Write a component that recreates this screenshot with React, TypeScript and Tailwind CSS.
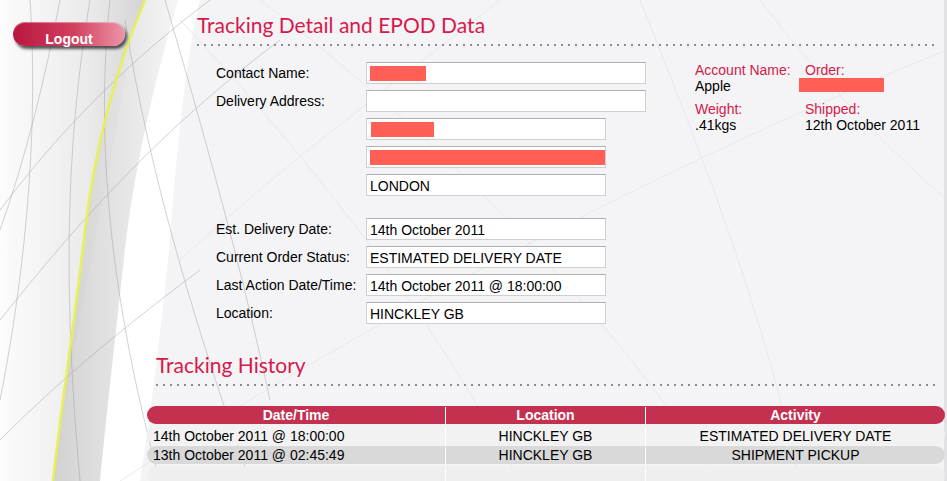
import React from "react";

const dots =
  "h-[2px] bg-[linear-gradient(to_right,#8c8c8c_2px,transparent_2px)] bg-[length:7px_2px] bg-repeat-x";

const Redact = ({ w, ml = 2 }: { w: number; ml?: number }) => (
  <span
    className="inline-block h-[15px] bg-[#ff5f55] align-middle"
    style={{ width: w, marginLeft: ml }}
  />
);

const Field = ({
  label,
  wide,
  children,
}: {
  label?: string;
  wide?: boolean;
  children?: React.ReactNode;
}) => (
  <div className="flex items-start">
    <div className="w-[150px] pt-[3px] text-[14px] leading-[16px] text-black">{label}</div>
    <div
      className={
        (wide ? "w-[280px]" : "w-[240px]") +
        " flex h-[22px] items-center border border-[#cfcfcf] border-t-[#b0b0b0] bg-white pl-[3px] pt-[1px] text-[14px] leading-[20px] text-black"
      }
    >
      {children}
    </div>
  </div>
);

const history = [
  { date: "14th October 2011 @ 18:00:00", loc: "HINCKLEY GB", act: "ESTIMATED DELIVERY DATE" },
  { date: "13th October 2011 @ 02:45:49", loc: "HINCKLEY GB", act: "SHIPMENT PICKUP" },
];

const Backdrop = () => (
  <svg className="absolute inset-0" width={947} height={481} viewBox="0 0 947 481">
    <defs>
      <linearGradient id="lg" x1="0" x2="1" y1="0" y2="0">
        <stop offset="0" stopColor="#fcfcfc" />
        <stop offset="0.6" stopColor="#ebebeb" />
        <stop offset="1" stopColor="#d4d4d4" />
      </linearGradient>
      <linearGradient id="band" x1="0" x2="1" y1="0" y2="0">
        <stop offset="0" stopColor="#c2c2c2" />
        <stop offset="1" stopColor="#f2f2f2" />
      </linearGradient>
    </defs>
    <rect width="947" height="481" fill="#f4f4f6" />
    <path d="M140,0 L200,0 C185,60 176,160 170,240 C160,340 150,420 140,481 L50,481 Z" fill="#ffffff" />
    <g fill="none" stroke="#e9e9ec" strokeWidth="1">
      <path d="M180,20 C330,180 440,330 520,481" />
      <path d="M120,481 C400,300 700,150 947,50" />
      <path d="M640,0 C700,150 760,300 800,481" />
      <path d="M260,0 C420,120 600,300 720,481" />
      <path d="M500,0 C400,80 300,150 180,260" />
      <path d="M760,0 C820,80 900,160 947,200" />
    </g>
    <path d="M0,0 L145,0 C115,70 95,150 85,230 C75,320 62,400 53,481 L0,481 Z" fill="url(#lg)" />
    <path
      d="M145,0 L178,0 C155,80 136,160 126,240 C116,330 106,420 100,481 L53,481 C62,400 75,320 85,230 C95,150 115,70 145,0 Z"
      fill="url(#band)"
      opacity="0.75"
    />
    <g fill="none" stroke="#9c9c9c" strokeWidth="0.6" opacity="0.75">
      <path d="M0,210 C60,130 130,60 210,0" />
      <path d="M0,320 C80,220 160,130 280,40" />
      <path d="M30,0 C40,150 20,300 0,400" />
      <path d="M90,0 C70,120 60,260 80,481" />
      <path d="M110,0 C95,140 110,300 160,481" />
      <path d="M60,0 C45,80 25,160 0,230" />
      <path d="M0,440 C60,380 120,330 200,270" />
      <path d="M125,20 C150,180 200,340 250,481" />
      <path d="M165,0 C200,120 240,260 270,400" />
    </g>
    <path d="M145,0 C115,70 95,150 85,230 C75,320 62,400 53,481" fill="none" stroke="#e6f057" strokeWidth="2.5" />
    <rect x="944" y="0" width="3" height="481" fill="#e2e2e4" />
  </svg>
);

export default function App() {
  return (
    <div className="relative h-[481px] w-[947px] overflow-hidden font-['Liberation_Sans',Arial,sans-serif]">
      <Backdrop />
      <div className="relative flex">
        <aside className="w-[147px] shrink-0">
          <button className="ml-[13px] mt-[22px] flex h-[24px] w-[112px] items-center justify-center rounded-full bg-[linear-gradient(to_right,#b8173f,#d2405f_55%,#ec96a8)] pt-[9px] text-[14px] font-bold leading-[16px] text-white shadow-[2px_3px_3px_rgba(0,0,0,0.65),inset_0_1px_1px_rgba(255,255,255,0.4)]">
            Logout
          </button>
        </aside>

        <main className="w-[798px] shrink-0">
          <section className="pl-[50px]">
            <h1 className="mt-[12px] h-[26px] font-['Lato',sans-serif] text-[21px] leading-[26px] text-[#d7194b]">
              Tracking Detail and EPOD Data
            </h1>
            <div className={dots + " mt-[6px] w-[738px]"} />

            <div className="mt-[16px] flex items-start pl-[19px]">
              <div className="flex w-[480px] flex-col gap-[6px]">
                <Field label="Contact Name:" wide>
                  <Redact w={56} ml={0} />
                </Field>
                <Field label="Delivery Address:" wide />
                <Field>
                  <Redact w={63} ml={1} />
                </Field>
                <Field>
                  <span className="inline-block h-[15px] w-[235px] bg-[#ff5f55]" />
                </Field>
                <Field>LONDON</Field>
                <div className="mt-[16px] flex flex-col gap-[6px]">
                  <Field label="Est. Delivery Date:">14th October 2011</Field>
                  <Field label="Current Order Status:">ESTIMATED DELIVERY DATE</Field>
                  <Field label="Last Action Date/Time:">14th October 2011 @ 18:00:00</Field>
                  <Field label="Location:">HINCKLEY GB</Field>
                </div>
              </div>

              <div className="grid grid-cols-[110px_140px] content-start gap-y-[7px] text-[14px] leading-[16px]">
                <div>
                  <div className="text-[#d41a48]">Account Name:</div>
                  <div className="text-black">Apple</div>
                </div>
                <div>
                  <div className="text-[#d41a48]">Order:</div>
                  <div className="-ml-[6px] h-[14px] w-[85px] bg-[#ff5f55]" />
                </div>
                <div>
                  <div className="text-[#d41a48]">Weight:</div>
                  <div className="text-black">.41kgs</div>
                </div>
                <div>
                  <div className="text-[#d41a48]">Shipped:</div>
                  <div className="text-black">12th October 2011</div>
                </div>
              </div>
            </div>
          </section>

          <section className="pl-[9px]">
            <h2 className="mt-[28px] h-[26px] font-['Lato',sans-serif] text-[21px] leading-[26px] text-[#d7194b]">
              Tracking History
            </h2>
            <div className={dots + " mt-[6px] w-[779px]"} />
          </section>

          <div className="mt-[20px] text-[14px]">
            <div className="flex h-[18px] rounded-full bg-[#c4304f] pt-[1px] font-bold leading-[17px] text-white">
              <div className="w-[299px] border-r border-white text-center">Date/Time</div>
              <div className="w-[200px] border-r border-white text-center">Location</div>
              <div className="flex-1 text-center">Activity</div>
            </div>
            {history.map((row, i) => (
              <div
                key={row.date}
                className={
                  (i === 0 ? "h-[21px] bg-[#f2f2f2] pt-[3px] leading-[18px]" : "mt-px h-[18px] bg-[#d9d9d9] pt-[1px] leading-[17px]") +
                  " flex rounded-full text-black"
                }
              >
                <div className="w-[299px] border-r border-white pl-[6px]">{row.date}</div>
                <div className="w-[200px] border-r border-white text-center">{row.loc}</div>
                <div className="flex-1 text-center">{row.act}</div>
              </div>
            ))}
            <div className="mt-[2px] flex h-[18px] rounded-full bg-[#efefef]">
              <div className="w-[299px] border-r border-white" />
              <div className="w-[200px] border-r border-white" />
              <div className="flex-1" />
            </div>
          </div>
        </main>
      </div>
    </div>
  );
}
